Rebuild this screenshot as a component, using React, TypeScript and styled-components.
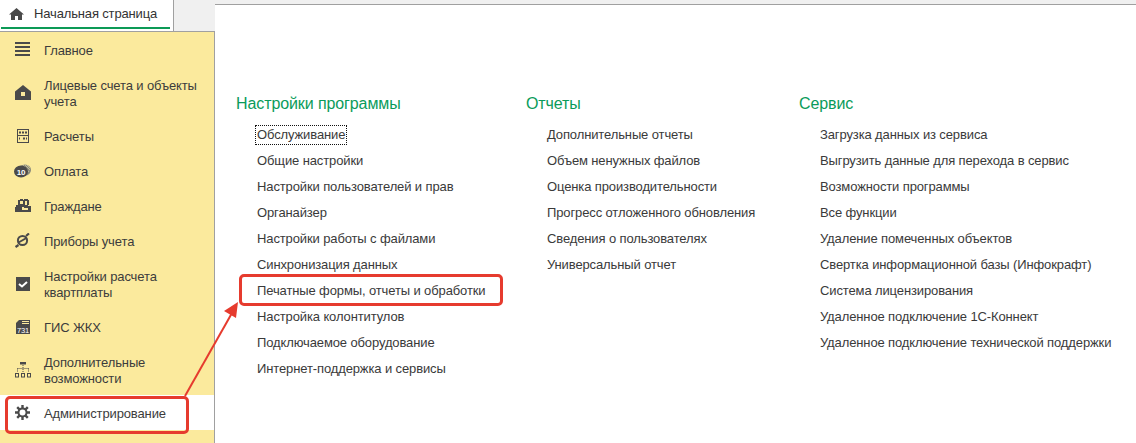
import React from "react";
import styled, { createGlobalStyle } from "styled-components";

const Global = createGlobalStyle`
  html, body { margin: 0; padding: 0; background: #fff; }
  body { font-family: "Liberation Sans", Arial, sans-serif; width: 1136px; height: 443px; overflow: hidden; }
`;

const Page = styled.div`
  position: relative;
  width: 1136px;
  height: 443px;
  display: grid;
  grid-template-columns: 215px 1fr;
  overflow: hidden;
  background: #fff;
`;
const Left = styled.div`
  display: flex;
  flex-direction: column;
  height: 443px;
  background: #f0f0f0;
`;
const TabBar = styled.div`
  height: 31px;
  display: flex;
  background: #f0f0f0;
  border-bottom: 1px solid #a0a0a0;
  box-sizing: content-box;
`;
const Tab = styled.div`
  width: 174px;
  height: 31px;
  box-sizing: border-box;
  background: #fff;
  border-right: 1px solid #a0a0a0;
  padding: 0 3px 0 1px;
  display: flex;
  flex-direction: column;
`;
const TabInner = styled.div`
  height: 27px;
  flex: none;
  border-bottom: 2px solid #0c9a56;
  box-sizing: content-box;
  display: flex;
  align-items: center;
  gap: 10px;
  padding-left: 8px;
  font-size: 13px;
  letter-spacing: -0.15px;
  color: #333;
`;
const Side = styled.nav`
  flex: 1;
  background: #fbea9d;
  border-right: 1px solid #a0a0a0;
  display: flex;
  flex-direction: column;
`;
const Row = styled.div<{ $tall?: boolean; $active?: boolean }>`
  height: ${(p) => (p.$tall ? 51 : 35)}px;
  flex: none;
  display: flex;
  align-items: center;
  gap: 13px;
  padding-left: 14px;
  background: ${(p) => (p.$active ? "#fff" : "transparent")};
  font-size: 13px;
  line-height: 16px;
  letter-spacing: -0.12px;
  color: #3c3c3c;
`;
const IconBox = styled.span`
  width: 17px;
  height: 17px;
  flex: none;
  display: flex;
  align-items: center;
  justify-content: center;
`;
const RowText = styled.span`
  width: 165px;
  padding-top: 2px;
`;
const Main = styled.main`
  display: flex;
  flex-direction: column;
  background: #f0f0f0;
`;
const Strip = styled.div`
  height: 4px;
  flex: none;
  background: #f0f0f0;
`;
const Panel = styled.div`
  flex: 1;
  background: #fff;
  border-top: 1px solid #a0a0a0;
  display: flex;
  padding: 89px 0 0 21px;
`;
const Column = styled.section<{ $w: number }>`
  width: ${(p) => p.$w}px;
  flex: none;
  display: flex;
  flex-direction: column;
`;
const Heading = styled.h2`
  margin: 0 0 11px;
  font-size: 16px;
  line-height: 20px;
  height: 20px;
  font-weight: 400;
  letter-spacing: -0.1px;
  color: #0a9b5a;
`;
const Links = styled.div`
  display: flex;
  flex-direction: column;
  gap: 6px;
  padding-left: 19px;
`;
const LinkItem = styled.a<{ $focus?: boolean }>`
  align-self: flex-start;
  height: 20px;
  box-sizing: border-box;
  border: 1px dotted ${(p) => (p.$focus ? "#111" : "transparent")};
  padding: 0 1px;
  font-size: 13px;
  line-height: 18px;
  letter-spacing: -0.12px;
  color: #3a3a3a;
  white-space: nowrap;
`;
const RedBox = styled.div<{ $x: number; $y: number; $w: number; $h: number }>`
  position: absolute;
  left: ${(p) => p.$x}px;
  top: ${(p) => p.$y}px;
  width: ${(p) => p.$w}px;
  height: ${(p) => p.$h}px;
  box-sizing: border-box;
  border: 3px solid #e63b2e;
  border-radius: 5px;
  pointer-events: none;
`;
const ArrowLayer = styled.svg`
  position: absolute;
  left: 0;
  top: 0;
  pointer-events: none;
`;

const c = "#4a4a4a";
const icons: Record<string, React.ReactNode> = {
  menu: (
    <svg width="15" height="15" viewBox="0 0 15 15" fill={c}>
      <rect y="0" width="15" height="2" /><rect y="4" width="15" height="2" /><rect y="8" width="15" height="2" /><rect y="12" width="15" height="2" />
    </svg>
  ),
  house: (
    <svg width="16" height="15" viewBox="0 0 16 15" fill={c}>
      <path fillRule="evenodd" d="M8 0 16 6.500V15H0V6.500L8 0ZM6 7v4h4V7H6Z" />
    </svg>
  ),
  abacus: (
    <svg width="12" height="14" viewBox="0 0 12 14" fill="none" stroke={c}>
      <rect x=".5" y=".5" width="11" height="13" />
      <path d="M1 6.500h10" />
      <path d="M2 3.500h2M5 3.500h2M8 3.500h2M2 9.500h1M6 9.500h2M9 9.500h1" strokeWidth="2" />
    </svg>
  ),
  coin: (
    <svg width="17" height="14" viewBox="0 0 17 14">
      <ellipse cx="11" cy="6" rx="6" ry="5.500" fill="#8a8a7a" />
      <path d="M11 1l5 5M13 1l3 3M9 1l6 7" stroke="#d8d0a0" strokeWidth=".7" />
      <ellipse cx="7" cy="7.500" rx="7" ry="6" fill={c} />
      <text x="7" y="10.500" fontSize="8" fontWeight="700" fontFamily="Liberation Sans" textAnchor="middle" fill="#fff">10</text>
    </svg>
  ),
  people: (
    <svg width="16" height="13" viewBox="0 0 16 13" fill={c}>
      <path fillRule="evenodd" d="M5 0h3v1h1V0h4v1h1v5h-1v1h3v6H0V8h1V6h2V1h2V0Zm0 2v3h3V2H5Zm5 0v4h2V2h-2ZM7 8v3h6V9H9V8H7Z" />
    </svg>
  ),
  meter: (
    <svg width="15" height="15" viewBox="0 0 15 15" fill="none" stroke={c}>
      <circle cx="7.500" cy="7.500" r="4.600" strokeWidth="2" />
      <path d="M3.500 9.500 11.500 5" strokeWidth="2" />
      <path d="M11 3l3-2.500M3.500 12 .5 14" strokeWidth="2.200" />
    </svg>
  ),
  check: (
    <svg width="14" height="14" viewBox="0 0 14 14">
      <rect width="14" height="14" fill={c} />
      <path d="M3 7l3 2.500L11 5" fill="none" stroke="#fff" strokeWidth="2" />
    </svg>
  ),
  gis: (
    <svg width="14" height="14" viewBox="0 0 14 14">
      <path d="M3 0h11v14H0V3Z" fill={c} />
      <path d="M6 1.500h7M6 3.500h7" stroke="#fbea9d" strokeWidth="1" />
      <text x="7" y="12.500" fontSize="7.500" fontFamily="Liberation Sans" textAnchor="middle" fill="#fff">731</text>
    </svg>
  ),
  tree: (
    <svg width="16" height="16" viewBox="0 0 16 16" fill="none" stroke={c}>
      <rect x="5" y="0" width="6" height="2.500" fill={c} stroke="none" />
      <path d="M8 3v7M2.500 6.500h11M2.500 6.500v4M13.500 6.500v4" strokeDasharray="1 1" />
      <rect x=".5" y="11.500" width="3" height="3.500" /><rect x="6.500" y="11.500" width="3" height="3.500" /><rect x="12.500" y="11.500" width="3" height="3.500" />
    </svg>
  ),
  gear: (
    <svg width="15" height="15" viewBox="0 0 15 15">
      <g stroke={c} strokeWidth="2.400">
        <path d="M7.500 0v15M0 7.500h15M2.200 2.200l10.600 10.600M12.800 2.200 2.200 12.800" />
      </g>
      <circle cx="7.500" cy="7.500" r="5" fill={c} />
      <circle cx="7.500" cy="7.500" r="3" fill="#fff" />
    </svg>
  ),
};

const menu: { icon: string; text: string; tall?: boolean; active?: boolean }[] = [
  { icon: "menu", text: "Главное" },
  { icon: "house", text: "Лицевые счета и объекты учета", tall: true },
  { icon: "abacus", text: "Расчеты" },
  { icon: "coin", text: "Оплата" },
  { icon: "people", text: "Граждане" },
  { icon: "meter", text: "Приборы учета" },
  { icon: "check", text: "Настройки расчета квартплаты", tall: true },
  { icon: "gis", text: "ГИС ЖКХ" },
  { icon: "tree", text: "Дополнительные возможности", tall: true },
  { icon: "gear", text: "Администрирование", active: true },
];

const columns: { title: string; w: number; items: string[] }[] = [
  {
    title: "Настройки программы",
    w: 290,
    items: [
      "Обслуживание",
      "Общие настройки",
      "Настройки пользователей и прав",
      "Органайзер",
      "Настройки работы с файлами",
      "Синхронизация данных",
      "Печатные формы, отчеты и обработки",
      "Настройка колонтитулов",
      "Подключаемое оборудование",
      "Интернет-поддержка и сервисы",
    ],
  },
  {
    title: "Отчеты",
    w: 273,
    items: [
      "Дополнительные отчеты",
      "Объем ненужных файлов",
      "Оценка производительности",
      "Прогресс отложенного обновления",
      "Сведения о пользователях",
      "Универсальный отчет",
    ],
  },
  {
    title: "Сервис",
    w: 330,
    items: [
      "Загрузка данных из сервиса",
      "Выгрузить данные для перехода в сервис",
      "Возможности программы",
      "Все функции",
      "Удаление помеченных объектов",
      "Свертка информационной базы (Инфокрафт)",
      "Система лицензирования",
      "Удаленное подключение 1С-Коннект",
      "Удаленное подключение технической поддержки",
    ],
  },
];

export default function App() {
  return (
    <Page>
      <Global />
      <Left>
        <TabBar>
          <Tab>
            <TabInner>
              <svg width="15" height="12" viewBox="0 0 15 12" fill={c}>
                <path d="M7.500 0 15 6.500h-2V12H9V8H6v4H2V6.500H0Z" />
              </svg>
              Начальная страница
            </TabInner>
          </Tab>
        </TabBar>
        <Side>
          {menu.map((m) => (
            <Row key={m.text} $tall={m.tall} $active={m.active}>
              <IconBox>{icons[m.icon]}</IconBox>
              <RowText>{m.text}</RowText>
            </Row>
          ))}
        </Side>
      </Left>
      <Main>
        <Strip />
        <Panel>
          {columns.map((col) => (
            <Column key={col.title} $w={col.w}>
              <Heading>{col.title}</Heading>
              <Links>
                {col.items.map((t) => (
                  <LinkItem key={t} $focus={t === "Обслуживание"}>{t}</LinkItem>
                ))}
              </Links>
            </Column>
          ))}
        </Panel>
      </Main>
      <RedBox $x={5} $y={396} $w={184} $h={38} />
      <RedBox $x={239} $y={274} $w={264} $h={32} />
      <ArrowLayer width="1136" height="443" viewBox="0 0 1136 443">
        <path d="M185 396 232 313" stroke="#e63b2e" strokeWidth="2" fill="none" />
        <path d="M238 302 236 318 224 311Z" fill="#e63b2e" />
      </ArrowLayer>
    </Page>
  );
}
